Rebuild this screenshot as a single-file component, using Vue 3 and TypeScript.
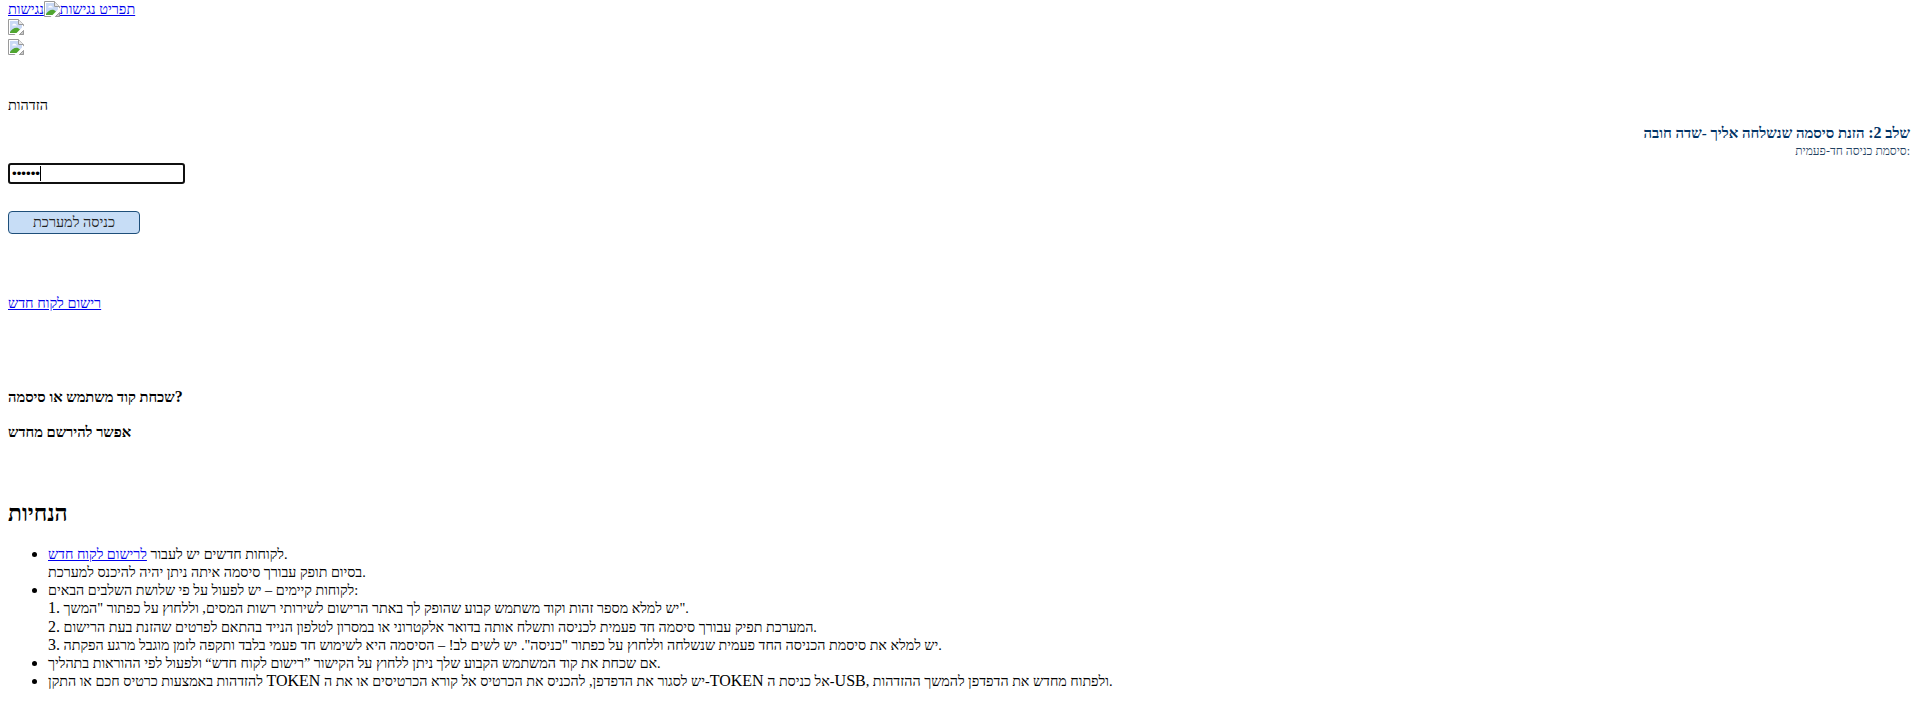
<script setup lang="ts">
const dir = "ltr";
</script>

<template>
  <div class="page" :dir="dir">
    <svg width="0" height="0" class="defs">
      <symbol id="broken" viewBox="0 0 16 16">
        <path d="M.5.5h10l5 5v10H.5z" fill="#fff" stroke="#9a9a9a" />
        <path d="M2 2h8v4h4v8H2z" fill="#c9d9f5" />
        <path d="M4 6.500c.5-2 3.500-2.500 5 0z" fill="#fff" />
        <path d="M2 14v-1c2-3 5-5 8-4l4 3v2z" fill="#4fa52f" />
        <path d="M10.500 .5v5h5" fill="#e8e8e8" stroke="#9a9a9a" />
        <path d="M6 16.500L16.500 6v4.500L10.500 16.500z" fill="#fff" />
        <path d="M11.500 15.500l4-4v4z" fill="#c8c8c8" stroke="#9a9a9a" />
      </symbol>
    </svg>
    <div class="logos">
      <a href="#" class="acc">תפריט נגישות<svg class="broken inline" viewBox="0 0 16 16"><use href="#broken" /></svg>נגישות</a>
    </div>
    <div class="img-row"><svg class="broken" viewBox="0 0 16 16"><use href="#broken" /></svg></div>
    <div class="img-row"><svg class="broken" viewBox="0 0 16 16"><use href="#broken" /></svg></div>
    <p class="title">הזדהות</p>
    <div class="step"><strong>שלב <span class="lat">2:</span> הזנת סיסמה שנשלחה אליך -שדה חובה</strong></div>
    <div class="label">סיסמת כניסה חד-פעמית:</div>
    <div class="pw-wrap">
      <input class="pw" type="password" value="123456" />
      <span class="caret"></span>
    </div>
    <div class="btn-wrap"><button class="btn" type="button">כניסה למערכת</button></div>
    <p class="reg"><a href="#">רישום לקוח חדש</a></p>
    <p class="q q1"><strong>שכחת קוד משתמש או סיסמה<span class="lat">?</span></strong></p>
    <p class="q q2"><strong>אפשר להירשם מחדש</strong></p>
    <h2 class="h">הנחיות</h2>
    <ul class="list">
      <li>לקוחות חדשים יש לעבור <a href="#">לרישום לקוח חדש</a>.<br />בסיום תופק עבורך סיסמה איתה ניתן יהיה להיכנס למערכת.</li>
      <li>לקוחות קיימים – יש לפעול על פי שלושת השלבים הבאים:<br />
        <span class="lat">1.</span> יש למלא מספר זהות וקוד משתמש קבוע שהופק לך באתר הרישום לשירותי רשות המסים, וללחוץ על כפתור "המשך".<br />
        <span class="lat">2.</span> המערכת תפיק עבורך סיסמה חד פעמית לכניסה ותשלח אותה בדואר אלקטרוני או במסרון לטלפון הנייד בהתאם לפרטים שהזנת בעת הרישום.<br />
        <span class="lat">3.</span> יש למלא את סיסמת הכניסה החד פעמית שנשלחה וללחוץ על כפתור "כניסה". יש לשים לב! – הסיסמה היא לשימוש חד פעמי בלבד ותקפה לזמן מוגבל מרגע הפקתה.</li>
      <li>אם שכחת את קוד המשתמש הקבוע שלך ניתן ללחוץ על הקישור ”רישום לקוח חדש“ ולפעול לפי ההוראות בתהליך.</li>
      <li>להזדהות באמצעות כרטיס חכם או התקן <span class="lat">TOKEN</span> יש לסגור את הדפדפן, להכניס את הכרטיס אל קורא הכרטיסים או את ה-<span class="lat">TOKEN</span> אל כניסת ה-<span class="lat">USB</span>, ולפתוח מחדש את הדפדפן להמשך ההזדהות.</li>
    </ul>
  </div>
</template>

<style scoped>
.page { font-family: "Liberation Serif", "Times New Roman", serif; font-size: 14.4px; line-height: 18px; color: #000; padding: 0 6px 8px 8px; }
.lat { font-size: 16px; }
.defs { position: absolute; }
a { color: #00e; }
.logos { height: 19px; line-height: 19px; }
.broken { width: 16px; height: 16px; display: block; }
.broken.inline { display: inline-block; vertical-align: -3px; }
.img-row { height: 16px; }
.img-row + .img-row { margin-top: 4px; }
.title { margin: 41px 0 0; }
.step { text-align: right; color: #003366; margin-top: 9px; line-height: 19px; font-size: 14.9px; }
.label { text-align: right; color: #1f3f5f; font-size: 12px; line-height: 16px; }
.pw-wrap { position: relative; width: 177px; margin-top: 4px; }
.pw { display: block; width: 177px; height: 21px; box-sizing: border-box; border: 2px solid #101010; border-radius: 3px; padding: 1px 2px; outline: none; font-size: 13.333px; }
.caret { position: absolute; left: 32px; top: 3px; width: 1px; height: 15px; background: #000; }
.btn-wrap { margin-top: 27px; }
.btn { display: block; width: 132px; height: 23px; background: #c7ddf6; border: 1px solid #1e4f7a; border-radius: 4px; font-family: inherit; font-size: 14.4px; color: #222; padding: 0; }
.reg { margin: 60px 0 0; }
.q { margin: 17px 0 0; font-size: 14.7px; }
.q1 { margin-top: 76px; }
.h { font-size: 22.8px; line-height: 27px; margin: 59px 0 0; font-weight: bold; }
.list { margin: 18px 0 0; padding-left: 40px; line-height: 18.15px; font-size: 14.25px; }
.list li::marker { font-size: 16px; }
</style>
